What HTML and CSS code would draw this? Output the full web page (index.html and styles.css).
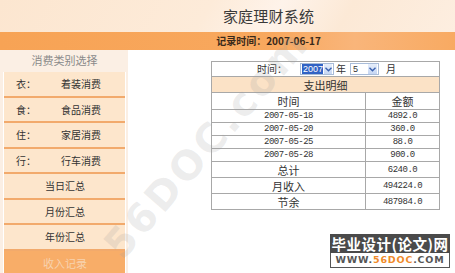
FILE: index.html
```html
<!DOCTYPE html>
<html>
<head>
<meta charset="utf-8">
<link rel="stylesheet" href="styles.css">
</head>
<body>
<div class="page">
  <header class="top">
    <h1 class="title">家庭理财系统</h1>
  </header>
  <div class="datebar">记录时间：2007-06-17</div>
  <div class="main">
    <aside class="side">
      <div class="side-head">消费类别选择</div>
      <ul class="menu">
        <li class="item two"><span class="k">衣：</span><span class="v">着装消费</span></li>
        <li class="item two"><span class="k">食：</span><span class="v">食品消费</span></li>
        <li class="item two"><span class="k">住：</span><span class="v">家居消费</span></li>
        <li class="item two"><span class="k">行：</span><span class="v">行车消费</span></li>
        <li class="item">当日汇总</li>
        <li class="item">月份汇总</li>
        <li class="item">年份汇总</li>
        <li class="item active">收入记录</li>
      </ul>
    </aside>
    <section class="content">
      <table class="detail">
        <tr class="sel-row">
          <td colspan="2">
            <div class="picker">
              <span class="lbl">时间：</span>
              <span class="select s1"><span class="val hl">2007</span><span class="btn"><svg width="7" height="5" viewBox="0 0 7 5"><path d="M0.5 0.8 L3.5 3.8 L6.5 0.8" fill="none" stroke="#3a62b0" stroke-width="1.4"/></svg></span></span>
              <span class="unit">年</span>
              <span class="select s2"><span class="val">5</span><span class="btn"><svg width="7" height="5" viewBox="0 0 7 5"><path d="M0.5 0.8 L3.5 3.8 L6.5 0.8" fill="none" stroke="#3a62b0" stroke-width="1.4"/></svg></span></span>
              <span class="unit">月</span>
            </div>
          </td>
        </tr>
        <tr class="cap-row"><td colspan="2">支出明细</td></tr>
        <tr class="head-row"><td class="c1">时间</td><td class="c2">金额</td></tr>
        <tr class="data"><td class="num">2007-05-18</td><td class="num">4892.0</td></tr>
        <tr class="data"><td class="num">2007-05-20</td><td class="num">360.0</td></tr>
        <tr class="data"><td class="num">2007-05-25</td><td class="num">88.0</td></tr>
        <tr class="data"><td class="num">2007-05-28</td><td class="num">900.0</td></tr>
        <tr class="sum"><td>总计</td><td class="num">6240.0</td></tr>
        <tr class="sum"><td>月收入</td><td class="num">494224.0</td></tr>
        <tr class="sum"><td>节余</td><td class="num">487984.0</td></tr>
      </table>
    </section>
  </div>
  <div class="wm">56DOC.com</div>
  <div class="logo">
    <div class="logo-top">毕业设计(论文)网</div>
    <div class="logo-bot">WWW.<span class="o">56DOC</span>.COM</div>
  </div>
</div>
</body>
</html>
```
FILE: styles.css
```css
* { box-sizing: border-box; }
html, body { margin: 0; padding: 0; }
body {
  width: 455px;
  height: 273px;
  overflow: hidden;
  background: #fff;
  font-family: "Noto Sans CJK SC", "Liberation Sans", sans-serif;
  color: #333;
}
.page { position: relative; width: 455px; height: 273px; overflow: hidden; }

.top {
  height: 32px;
  background: linear-gradient(120deg, #fce6d0 0%, #fdebd9 45%, #fef3ea 60%, #fce9d6 75%, #fdeee0 100%);
  display: flex;
  justify-content: center;
  padding-left: 82px;
}
.title {
  margin: 0;
  font-size: 15px;
  font-weight: normal;
  line-height: 32px;
  letter-spacing: 0.2px;
  color: #3a3a3a;
}
.datebar {
  height: 18px;
  background: linear-gradient(90deg, #f7a355 0%, #f8a85e 60%, #f9b57a 78%, #f8aa62 100%);
  text-align: center;
  padding-left: 82px;
  font-size: 10px;
  font-weight: bold;
  line-height: 18px;
  color: #3a2a1a;
}
.main { display: flex; height: 223px; }
.side {
  width: 128px;
  background: #fbefe4;
  padding: 0 2px 0 3px;
}
.side-head {
  height: 22px;
  text-align: center;
  font-size: 11px;
  line-height: 21px;
  color: #8a8a8a;
}
.menu {
  list-style: none;
  margin: 0;
  padding: 0;
  border-left: 1px solid #fff;
  border-right: 1px solid #fff;
}
.item {
  height: 25.5px;
  background: #fde6cc;
  border-bottom: 2px solid #f2aa6c;
  font-size: 10px;
  line-height: 24px;
  text-align: center;
  color: #333;
  padding-left: 1px;
}
.item.two { display: flex; text-align: left; }
.item .k { width: 55px; padding-left: 11px; }
.item .v { flex: 1; text-align: left; padding-left: 1px; }
.item.active {
  background: #f8ad68;
  color: #f7d2ae;
  border-bottom: none;
  font-size: 11px;
}

.content { flex: 1; padding: 11px 0 0 83px; }
.detail {
  width: 229px;
  border-collapse: collapse;
  border: 1px solid #8c8c8c;
  font-size: 10.5px;
  color: #333;
}
.detail td {
  border: 1px solid #a8a8a8;
  text-align: center;
  padding: 0;
  line-height: 12px;
}
.sel-row td { height: 15px; }
.picker { display: flex; align-items: center; justify-content: center; height: 13px; padding-left: 2px; }
.lbl { font-size: 10px; margin-right: 13px; }
.select {
  display: flex;
  align-items: center;
  height: 12px;
  border: 1px solid #a9bcd8;
  background: #fff;
}
.s1 { width: 34px; }
.s2 { width: 29px; margin-left: 4px; }
.val {
  flex: 1;
  height: 10px;
  font-family: "Liberation Sans", sans-serif;
  font-size: 9px;
  line-height: 10px;
  text-align: left;
  padding-left: 2px;
}
.val.hl { background: #3162c4; color: #fff; margin: 0 1px; padding-left: 1px; }
.btn {
  width: 9px;
  height: 10px;
  background: linear-gradient(#e6eefb, #c6d6f2);
  display: flex;
  align-items: center;
  justify-content: center;
  margin-right: 1px;
}
.unit { font-size: 10px; margin-left: 2px; }
.unit:last-child { margin-left: 7px; }
.cap-row td { height: 16px; background: #fbe2c6; font-size: 11px; }
.head-row td { height: 17px; font-size: 11px; }
.head-row .c1 { width: 154px; }
.data td { height: 13px; }
.num {
  font-family: "Liberation Mono", monospace;
  font-size: 9px;
  letter-spacing: -0.5px;
}
.detail .data td { line-height: 11px; }
.sum td { height: 16px; font-size: 11px; }
.sum td.num { font-size: 9px; }

.wm {
  position: absolute;
  left: 112px;
  top: 228px;
  height: 48px;
  font-family: "DejaVu Sans", sans-serif;
  font-weight: bold;
  font-size: 40px;
  line-height: 48px;
  letter-spacing: 3px;
  color: rgba(160, 160, 160, 0.2);
  transform: rotate(-49deg);
  transform-origin: 0 50%;
  white-space: nowrap;
  pointer-events: none;
}
.logo {
  position: absolute;
  left: 330px;
  top: 234px;
  width: 120px;
}
.logo-top {
  height: 19px;
  background: #4a4a4a;
  color: #fff;
  font-weight: bold;
  font-size: 14.5px;
  line-height: 19px;
  text-align: center;
  letter-spacing: 0.5px;
  white-space: nowrap;
}
.logo-bot {
  height: 15px;
  background: #fff;
  border: 1px solid #555;
  border-top: none;
  font-family: "DejaVu Sans", sans-serif;
  font-weight: bold;
  font-size: 9.5px;
  line-height: 14px;
  text-align: center;
  color: #555;
  letter-spacing: 0.8px;
}
.logo-bot .o { color: #f08a2a; }
```
